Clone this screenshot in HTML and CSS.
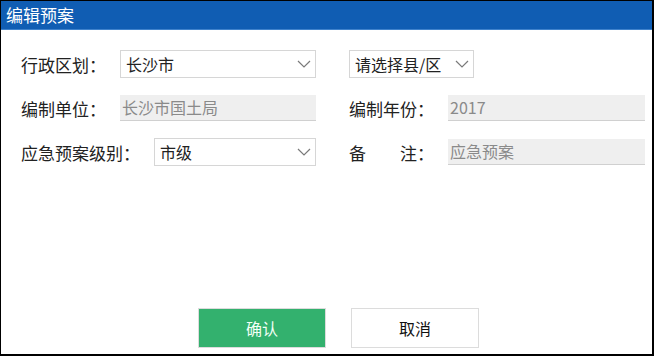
FILE: index.html
```html
<!DOCTYPE html>
<html lang="zh-CN">
<head>
<meta charset="utf-8">
<title>编辑预案</title>
<link rel="stylesheet" href="styles.css">
</head>
<body>
<div class="dialog">
  <div class="titlebar">编辑预案</div>
  <div class="content">
    <div class="form">
      <div class="cell">
        <span class="label">行政区划：</span>
        <div class="select grow"><span class="value">长沙市</span><svg class="chev" viewBox="0 0 14 8" width="14" height="8"><polyline points="1,1 7,7 13,1" fill="none" stroke="#7a7a7a" stroke-width="1.2"/></svg></div>
      </div>
      <div class="cell">
        <div class="select county"><span class="value">请选择县/区</span><svg class="chev" viewBox="0 0 14 8" width="14" height="8"><polyline points="1,1 7,7 13,1" fill="none" stroke="#7a7a7a" stroke-width="1.2"/></svg></div>
      </div>
      <div class="cell">
        <span class="label">编制单位：</span>
        <div class="input grow">长沙市国土局</div>
      </div>
      <div class="cell">
        <span class="label">编制年份：</span>
        <div class="input grow">2017</div>
      </div>
      <div class="cell">
        <span class="label">应急预案级别：</span>
        <div class="select grow"><span class="value">市级</span><svg class="chev" viewBox="0 0 14 8" width="14" height="8"><polyline points="1,1 7,7 13,1" fill="none" stroke="#7a7a7a" stroke-width="1.2"/></svg></div>
      </div>
      <div class="cell">
        <span class="label">备　　注：</span>
        <div class="input grow">应急预案</div>
      </div>
    </div>
    <div class="footer">
      <button class="btn btn-ok">确认</button>
      <button class="btn btn-cancel">取消</button>
    </div>
  </div>
</div>
</body>
</html>
```
FILE: styles.css
```css
html, body {
  margin: 0;
  padding: 0;
  background: #fff;
}
body {
  font-family: "Noto Sans CJK SC", "Noto Sans", sans-serif;
  color: #222;
}
.dialog {
  width: 651px;
  height: 353px;
  border: 1px solid #000;
  border-right-width: 2px;
  border-bottom-width: 2px;
  display: flex;
  flex-direction: column;
  background: #fff;
}
.titlebar {
  height: 28px;
  background: #105db3;
  color: #fff;
  font-size: 17px;
  line-height: 28px;
  padding-left: 5px;
  border-bottom: 1px solid #3f82cc;
}
.content {
  flex: 1;
  display: flex;
  flex-direction: column;
  padding: 20px 0 6px 20px;
}
.form {
  display: grid;
  grid-template-columns: 295px 296px;
  column-gap: 33px;
  row-gap: 16px;
}
.cell {
  display: flex;
  align-items: center;
  height: 28px;
}
.label {
  font-size: 17px;
  color: #222;
  white-space: nowrap;
  margin-right: 14px;
}
.grow {
  flex: 1;
}
.select {
  box-sizing: border-box;
  height: 28px;
  border: 1px solid #d6d6d6;
  background: #fff;
  display: flex;
  align-items: center;
  justify-content: space-between;
  padding: 0 4px 0 5px;
  font-size: 16px;
  color: #222;
}
.select.county {
  width: 125px;
}
.chev {
  display: block;
  margin-right: 0;
}
.input {
  box-sizing: border-box;
  height: 26px;
  background: #efefef;
  border-bottom: 1px solid #d0d0d0;
  font-size: 16px;
  color: #8a8a8a;
  line-height: 25px;
  padding-left: 2px;
}
.footer {
  margin-top: auto;
  display: flex;
  gap: 25px;
  padding-left: 177px;
}
.btn {
  box-sizing: border-box;
  width: 128px;
  height: 40px;
  font-family: "Noto Sans CJK SC", "Noto Sans", sans-serif;
  font-size: 16px;
  border: 1px solid #dcdcdc;
  padding: 0;
}
.btn-ok {
  background: #33b16e;
  color: #f2fff6;
}
.btn-cancel {
  background: #fff;
  color: #111;
}
```
